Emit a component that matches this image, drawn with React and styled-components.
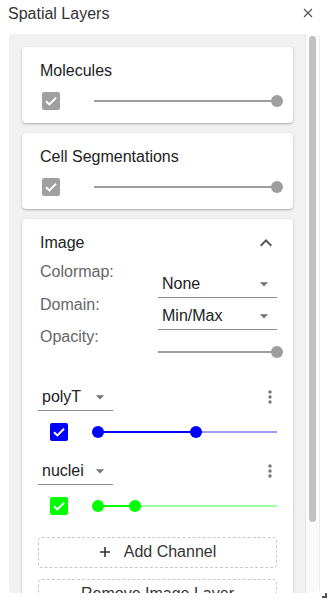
import React from "react";
import styled, { createGlobalStyle } from "styled-components";

const GlobalStyle = createGlobalStyle`
  html, body {
    margin: 0;
    padding: 0;
    background: #fff;
  }
  body {
    font-family: "Liberation Sans", Arial, Helvetica, sans-serif;
    color: #222;
  }
  * {
    box-sizing: border-box;
  }
`;

const Page = styled.div`
  position: relative;
  width: 331px;
  height: 608px;
  display: flex;
  flex-direction: column;
`;

const Header = styled.div`
  display: flex;
  justify-content: space-between;
  align-items: flex-start;
  height: 34px;
  padding: 5px 18px 0 8px;
`;

const HeaderTitle = styled.h1`
  margin: 0;
  font-size: 16px;
  line-height: 18px;
  font-weight: 400;
  color: #333;
`;

const CloseButton = styled.button`
  margin-top: 3px;
  padding: 0;
  border: 0;
  background: none;
  width: 10px;
  height: 10px;
  display: flex;
  cursor: pointer;
`;

const Panel = styled.div`
  margin-left: 9px;
  width: 311px;
  height: 559px;
  background: #f1f1f1;
  border-radius: 4px;
  overflow: hidden;
  display: flex;
`;

const Viewport = styled.div`
  flex: 1;
  min-width: 0;
  overflow: hidden;
`;

const ScrollTrack = styled.div`
  flex: none;
  width: 15px;
  padding: 2px 3px;
  background: #fafafa;
  border-left: 1px solid #e4e4e4;
  border-right: 1px solid #ececec;
`;

const ScrollThumb = styled.div`
  height: ${(p) => p.$length}px;
  border-radius: 5px;
  background: #c1c1c1;
`;

const LayerList = styled.div`
  display: flex;
  flex-direction: column;
  gap: 10px;
  padding: 13px 12px 13px 13px;
`;

const Card = styled.section`
  background: #fff;
  border-radius: 4px;
  box-shadow: 0 1px 3px rgba(0, 0, 0, 0.2), 0 1px 1px rgba(0, 0, 0, 0.12);
  padding: 15px 16px ${(p) => (p.$expanded ? "14px" : "10px")} 16px;
  display: flex;
  flex-direction: column;
`;

const CardTitle = styled.h2`
  margin: 0 0 0 2px;
  font-size: 16px;
  line-height: 18px;
  font-weight: 400;
  color: #222;
`;

const CardHeader = styled.div`
  display: flex;
  justify-content: space-between;
  align-items: center;
  height: 18px;
`;

const ToggleRow = styled.div`
  display: flex;
  align-items: center;
  height: 24px;
  margin-top: 9px;
  padding-left: ${(p) => p.$indent}px;
`;

const Box = styled.span`
  flex: none;
  width: 18px;
  height: 18px;
  border-radius: 2px;
  background: ${(p) => p.$color};
  display: inline-flex;
  align-items: center;
  justify-content: center;
`;

const SliderWrap = styled.div`
  flex: 1;
  height: 12px;
  display: flex;
  align-items: center;
  margin: 0 -6px 0 ${(p) => p.$offset || 0}px;
`;

const Rail = styled.div`
  position: relative;
  flex: 1;
  height: 2px;
  margin: 0 6px;
`;

const Thumb = styled.span`
  position: absolute;
  top: 50%;
  width: 12px;
  height: 12px;
  border-radius: 50%;
  background: ${(p) => p.$color};
  transform: translate(-50%, -50%);
`;

const PropsGrid = styled.div`
  display: flex;
  margin-top: 11px;
`;

const LabelCol = styled.div`
  width: 120px;
  padding-left: 2px;
  display: flex;
  flex-direction: column;
  gap: 14.5px;
`;

const PropLabel = styled.span`
  font-size: 16px;
  line-height: 18px;
  color: #666;
`;

const ControlCol = styled.div`
  flex: 1;
  padding-top: 12px;
  display: flex;
  flex-direction: column;
`;

const Select = styled.div`
  display: flex;
  align-items: center;
  height: 23px;
  width: ${(p) => p.$width || "auto"};
  padding: 0 3px 4px 4px;
  margin-bottom: ${(p) => p.$gap || 0}px;
  border-bottom: 1px solid #8c8c8c;
  font-size: 16px;
  line-height: 18px;
  color: #222;

  & > span {
    flex: 1;
  }
  & > svg {
    display: block;
    margin: -1px 0;
  }
`;

const OpacityRow = styled.div`
  display: flex;
  margin-top: 16px;
`;

const ChannelList = styled.div`
  display: flex;
  flex-direction: column;
  gap: 18px;
  margin-top: 30px;
`;

const ChannelTop = styled.div`
  display: flex;
  justify-content: space-between;
  align-items: flex-start;
`;

const MenuIcon = styled.svg`
  display: block;
  margin: -1px -3px 0 0;
`;

const ButtonStack = styled.div`
  display: flex;
  flex-direction: column;
  gap: 11px;
  margin-top: 19px;
`;

const DashedButton = styled.button`
  display: flex;
  align-items: center;
  justify-content: center;
  gap: 13px;
  width: 100%;
  padding: 5px 0 6px;
  border: 1px dashed #c8c8c8;
  border-radius: 4px;
  background: #fff;
  font-family: inherit;
  font-size: 16px;
  line-height: 18px;
  color: #333;
  cursor: pointer;
`;

const ResizeHandle = styled.span`
  position: absolute;
  right: 4px;
  bottom: 10px;
  width: 5px;
  height: 5px;
  border-right: 2px solid #555;
  border-bottom: 2px solid #555;
`;

const Check = () => (
  <svg width="18" height="18" viewBox="0 0 18 18">
    <polyline
      points="4,9.2 7.4,12.4 14,5.8"
      fill="none"
      stroke="#fff"
      strokeWidth="2"
    />
  </svg>
);

const Arrow = () => (
  <svg width="20" height="20" viewBox="0 0 24 24">
    <path d="M7 10l5 5 5-5z" fill="#757575" />
  </svg>
);

const Slider = ({ value, color = "#9e9e9e", offset }) => (
  <SliderWrap $offset={offset}>
    <Rail style={{ background: color }}>
      <Thumb $color={color} style={{ left: `${value * 100}%` }} />
    </Rail>
  </SliderWrap>
);

const RangeSlider = ({ values, color, light, offset }) => {
  const [a, b] = values.map((v) => v * 100);
  return (
    <SliderWrap $offset={offset}>
      <Rail
        style={{
          background: `linear-gradient(to right, ${light} ${a}%, ${color} ${a}%, ${color} ${b}%, ${light} ${b}%)`,
        }}
      >
        <Thumb $color={color} style={{ left: `${a}%` }} />
        <Thumb $color={color} style={{ left: `${b}%` }} />
      </Rail>
    </SliderWrap>
  );
};

const channels = [
  { name: "polyT", color: "#0000ff", light: "#9a9aff", range: [0, 0.548] },
  { name: "nuclei", color: "#00ff00", light: "#9dff9d", range: [0, 0.207] },
];

const SimpleLayer = ({ title }) => (
  <Card>
    <CardTitle>{title}</CardTitle>
    <ToggleRow $indent={4}>
      <Box $color="#a0a0a0">
        <Check />
      </Box>
      <Slider value={1} offset={28} />
    </ToggleRow>
  </Card>
);

const Channel = ({ name, color, light, range }) => (
  <div>
    <ChannelTop>
      <Select $width="75px">
        <span>{name}</span>
        <Arrow />
      </Select>
      <MenuIcon width="20" height="20" viewBox="0 0 20 20">
        <circle cx="10" cy="5" r="1.7" fill="#777" />
        <circle cx="10" cy="10" r="1.7" fill="#777" />
        <circle cx="10" cy="15" r="1.7" fill="#777" />
      </MenuIcon>
    </ChannelTop>
    <ToggleRow $indent={12}>
      <Box $color={color}>
        <Check />
      </Box>
      <RangeSlider values={range} color={color} light={light} offset={24} />
    </ToggleRow>
  </div>
);

const App = () => {
  return (
    <Page>
      <GlobalStyle />
      <Header>
        <HeaderTitle>Spatial Layers</HeaderTitle>
        <CloseButton aria-label="close">
          <svg width="10" height="10" viewBox="0 0 10 10">
            <path d="M1 1L9 9M9 1L1 9" stroke="#555" strokeWidth="1.2" />
          </svg>
        </CloseButton>
      </Header>
      <Panel>
        <Viewport>
          <LayerList>
            <SimpleLayer title="Molecules" />
            <SimpleLayer title="Cell Segmentations" />
            <Card $expanded>
              <CardHeader>
                <CardTitle>Image</CardTitle>
                <svg width="24" height="24" viewBox="0 0 24 24" style={{ marginRight: -1 }}>
                  <path
                    d="M12 8l-6 6 1.41 1.41L12 10.83l4.59 4.58L18 14z"
                    fill="#555"
                  />
                </svg>
              </CardHeader>
              <PropsGrid>
                <LabelCol>
                  <PropLabel>Colormap:</PropLabel>
                  <PropLabel>Domain:</PropLabel>
                  <PropLabel>Opacity:</PropLabel>
                </LabelCol>
                <ControlCol>
                  <Select $gap={9}>
                    <span>None</span>
                    <Arrow />
                  </Select>
                  <Select>
                    <span>Min/Max</span>
                    <Arrow />
                  </Select>
                  <OpacityRow>
                    <Slider value={1} offset={-6} />
                  </OpacityRow>
                </ControlCol>
              </PropsGrid>
              <ChannelList>
                {channels.map((c) => (
                  <Channel key={c.name} {...c} />
                ))}
              </ChannelList>
              <ButtonStack>
                <DashedButton>
                  <svg width="12" height="12" viewBox="0 0 12 12">
                    <path d="M6 1v10M1 6h10" stroke="#333" strokeWidth="1.6" />
                  </svg>
                  Add Channel
                </DashedButton>
                <DashedButton>Remove Image Layer</DashedButton>
              </ButtonStack>
            </Card>
          </LayerList>
        </Viewport>
        <ScrollTrack>
          <ScrollThumb $length={486} />
        </ScrollTrack>
      </Panel>
      <ResizeHandle />
    </Page>
  );
};

export default App;
